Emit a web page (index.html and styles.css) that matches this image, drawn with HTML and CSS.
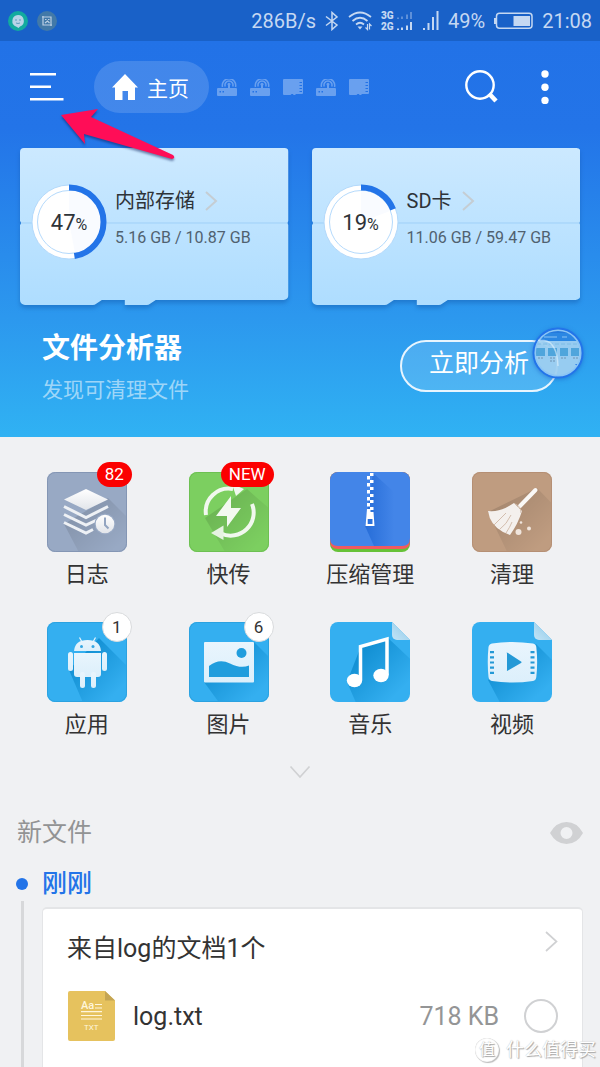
FILE: index.html
```html
<!DOCTYPE html>
<html lang="zh-CN">
<head>
<meta charset="utf-8">
<meta name="viewport" content="width=device-width, initial-scale=1">
<title>主页</title>
<link rel="stylesheet" href="styles.css">
</head>
<body>
<svg class="defs" width="0" height="0" aria-hidden="true">
  <defs>
    <linearGradient id="card-fill" x1="0" y1="0" x2="0" y2="1"><stop offset="0" stop-color="#cce9ff"/><stop offset="1" stop-color="#aeddff"/></linearGradient>
    <linearGradient id="paper" x1="0" y1="0" x2="0" y2="1"><stop offset="0" stop-color="#ffffff"/><stop offset="1" stop-color="#e2e5ea"/></linearGradient>
    <linearGradient id="ice" x1="0" y1="0" x2="0" y2="1"><stop offset="0" stop-color="#e9f5fd"/><stop offset="1" stop-color="#dceffb"/></linearGradient>
    <linearGradient id="fold" x1="0" y1="1" x2="1" y2="0"><stop offset="0" stop-color="#c3e4f6"/><stop offset="1" stop-color="#8cc8e8"/></linearGradient>
    <linearGradient id="shade" x1="0" y1="0" x2="1" y2="1"><stop offset="0.2" stop-color="#000" stop-opacity=".12"/><stop offset="0.75" stop-color="#000" stop-opacity="0"/></linearGradient>
    <linearGradient id="shade-zip" x1="0" y1="0" x2="1" y2="0"><stop offset="0" stop-color="#0a55c8" stop-opacity=".5"/><stop offset="1" stop-color="#0a55c8" stop-opacity="0"/></linearGradient>
    <linearGradient id="shade-blue" x1="0" y1="0" x2="1" y2="1"><stop offset="0.2" stop-color="#007fc4" stop-opacity=".65"/><stop offset="0.72" stop-color="#007fc4" stop-opacity="0"/></linearGradient>
    <clipPath id="tile"><rect width="80" height="80" rx="8"/></clipPath>
    <clipPath id="tile-fold"><path d="M8 0H62L80 18V72a8 8 0 0 1-8 8H8a8 8 0 0 1-8-8V8a8 8 0 0 1 8-8z"/></clipPath>
    <clipPath id="bubble-clip"><circle cx="28" cy="28" r="23"/></clipPath>
    <symbol id="card-shape" viewBox="0 0 269 157" preserveAspectRatio="none">
      <path fill="url(#card-fill)" d="M4 0H265a4 4 0 0 1 4 4V73q-2 2 0 4V147a5 5 0 0 1-5 5H136l-6 4q-1 1-3 1H105V152H82l-6 4q-1 1-3 1H5a5 5 0 0 1-5-5V77q2-2 0-4V4a4 4 0 0 1 4-4z"/>
      <path d="M1 75H268" stroke="#9fd0f8" stroke-width="1"/>
    </symbol>
    <symbol id="router" viewBox="0 0 20 17">
      <path fill-rule="evenodd" d="M1 9H11V6.500a1.500 1.500 0 1 1 2 0V9H19a1 1 0 0 1 1 1V16a1 1 0 0 1-1 1H1a1 1 0 0 1-1-1V10a1 1 0 0 1 1-1zM2.500 12v1.500H4V12zM5.500 12v1.500H7V12z" fill="currentColor"/>
      <path d="M5.500 8A6.700 6.700 0 1 1 18.500 8M8.300 7.500A4 4 0 1 1 15.700 7.500" fill="none" stroke="currentColor" stroke-width="1.500"/>
    </symbol>
    <symbol id="chip" viewBox="0 0 20 17">
      <path fill-rule="evenodd" d="M1 0H19a1 1 0 0 1 1 1V14a1 1 0 0 1-1 1H13l-1 1H10.500l-.5-1H8.500l-1 1H1a1 1 0 0 1-1-1V1a1 1 0 0 1 1-1zM16.500 3v1H19V3zM16.500 6v1H19V6zM16.500 9v1H19V9zM16.500 12v1H19V12z" fill="currentColor"/>
    </symbol>
  </defs>
</svg>

<div class="page">
  <header class="status">
    <svg class="notice" width="20" height="20" viewBox="0 0 20 20" aria-hidden="true"><circle cx="10" cy="10" r="10" fill="#12ab9f"/><path d="M10 4a6 6 0 0 1 2 11.600L10.500 17l-2-1.300A6 6 0 0 1 10 4z" fill="#b7d4e8"/><path d="M7 9h2M11 9h2M8 12q2 1 4 0" stroke="#5a9fc0" fill="none"/></svg>
    <svg class="notice" width="20" height="20" viewBox="0 0 20 20" aria-hidden="true"><circle cx="10" cy="10" r="10" fill="#4279a8"/><path d="M6 5V14H15M5 6H14V15M8 12l2.500-2 2 2M8 8.500h1.500M11 8.500h1.500" stroke="#bcd0e4" stroke-width="1.200" fill="none"/></svg>
    <div class="status-right">
      <span class="speed">286B/s</span>
      <svg width="14" height="20" viewBox="0 0 14 20" aria-hidden="true"><path d="M1 5.500 12 14 7 18.500V1.500L12 6 1 14.500" fill="none" stroke="currentColor" stroke-width="1.500"/></svg>
      <svg width="24" height="20" viewBox="0 0 24 20" fill="none" stroke="currentColor" stroke-width="1.700" aria-hidden="true"><path d="M1 6Q12 -3 23 6M4.500 10Q12 3.500 19.500 10M8 13.500Q12 10 16 13.500"/><path d="M9.500 15.500h5L12 18.500z" fill="currentColor" stroke="none"/><path d="M19.500 13v5.500l-2-2M21.500 18.500V13l2 2" stroke-width="1.200"/></svg>
      <svg class="net" width="33" height="20" viewBox="0 0 33 20" fill="currentColor" role="img" aria-label="3G 2G"><text x="0" y="8">3G</text><text x="0" y="19">2G</text><path d="M16 6.500h2V8h-2zM20 5.500h2V8h-2zM25 3.500h2V8h-2zM29 1h2v7h-2z" opacity=".4"/><path d="M16 17.500h2V19h-2zM20 16.500h2V19h-2zM25 14.500h2V19h-2zM29 11h2v8h-2z"/></svg>
      <svg width="16" height="20" viewBox="0 0 16 20" fill="currentColor" aria-hidden="true"><path d="M0 17h2v2H0zM4.500 12H6.500v7H4.500zM9 6h2v13H9zM13.500 0h2v19h-2z"/></svg>
      <span>49%</span>
      <svg width="39" height="18" viewBox="0 0 39 18" aria-hidden="true"><rect x="2.500" y="1.200" width="35.500" height="15" rx="3" fill="none" stroke="currentColor" stroke-width="1.500"/><path d="M0 6h2v6H0zM19.500 4H36V14H19.500z" fill="currentColor"/></svg>
      <time>21:08</time>
    </div>
  </header>

  <section class="hero">
    <nav class="toolbar">
      <button class="icon-button" aria-label="菜单"><svg width="34" height="28" viewBox="0 0 34 28" fill="#fff"><path d="M0 0H26V2.500H0zM0 12.500H21V15H0zM0 25H33.500V27.500H0z"/></svg></button>
      <div class="tabs">
        <button class="home"><svg width="26" height="26" viewBox="0 0 26 26" fill="#fff" aria-hidden="true"><path d="M13 0 26 13.500H23V26H16V17H10.500V26H3V13.500H0z"/></svg><span>主页</span></button>
        <div class="drives">
          <svg width="20" height="17"><use href="#router"/></svg>
          <svg width="20" height="17"><use href="#router"/></svg>
          <svg width="20" height="17"><use href="#chip"/></svg>
          <svg width="20" height="17"><use href="#router"/></svg>
          <svg width="20" height="17"><use href="#chip"/></svg>
        </div>
      </div>
      <button class="icon-button" aria-label="搜索"><svg width="34" height="34" viewBox="0 0 34 34" fill="none" stroke="#fff"><circle cx="15" cy="15" r="13.700" stroke-width="2.400"/><path d="M24 23.500 31 31" stroke-width="4.500"/></svg></button>
      <button class="icon-button" aria-label="更多"><svg width="8" height="34" viewBox="0 0 8 34" fill="#fff"><circle cx="4" cy="4" r="3.700"/><circle cx="4" cy="17.200" r="3.700"/><circle cx="4" cy="30.500" r="3.700"/></svg></button>
    </nav>

    <svg class="pointer" width="120" height="60" viewBox="0 0 120 60" aria-hidden="true"><path fill="#ff0d57" d="M3 10 40 4 33 12 115 50Q118 53 114 54L26 29 27 39z"/></svg>

    <div class="storage">
      <a class="drive-card" href="#internal">
        <svg class="card-bg" aria-hidden="true"><use href="#card-shape"/></svg>
        <span class="ring">
          <svg width="76" height="76" viewBox="0 0 76 76" aria-hidden="true"><circle cx="38" cy="38" r="37" fill="#fff" stroke="#b3d9fb"/><circle cx="38" cy="38" r="31.500" fill="none" stroke="#b5dafc"/><path d="M38 38V7A31 31 0 0 1 44 68.800z" fill="#f9fbff"/><circle cx="38" cy="38" r="34.500" fill="none" stroke="#2374e8" stroke-width="6" pathLength="100" stroke-dasharray="47.500 100" transform="rotate(-90 38 38)"/></svg>
          <span class="percent">47<small>%</small></span>
        </span>
        <span class="drive-text">
          <span class="drive-name">内部存储 <svg width="13" height="20" viewBox="0 0 13 20" fill="none" stroke="#c5cdd3" stroke-width="2" aria-hidden="true"><path d="M1 1 11 10 1 19"/></svg></span>
          <span class="drive-size">5.16 GB / 10.87 GB</span>
        </span>
      </a>
      <a class="drive-card" href="#sdcard">
        <svg class="card-bg" aria-hidden="true"><use href="#card-shape"/></svg>
        <span class="ring">
          <svg width="76" height="76" viewBox="0 0 76 76" aria-hidden="true"><circle cx="38" cy="38" r="37" fill="#fff" stroke="#b3d9fb"/><circle cx="38" cy="38" r="31.500" fill="none" stroke="#b5dafc"/><path d="M38 38V7A31 31 0 0 1 67 27z" fill="#f9fbff"/><circle cx="38" cy="38" r="34.500" fill="none" stroke="#2374e8" stroke-width="6" pathLength="100" stroke-dasharray="19 100" transform="rotate(-90 38 38)"/></svg>
          <span class="percent">19<small>%</small></span>
        </span>
        <span class="drive-text">
          <span class="drive-name">SD卡 <svg width="13" height="20" viewBox="0 0 13 20" fill="none" stroke="#c5cdd3" stroke-width="2" aria-hidden="true"><path d="M1 1 11 10 1 19"/></svg></span>
          <span class="drive-size">11.06 GB / 59.47 GB</span>
        </span>
      </a>
    </div>

    <div class="analyzer">
      <div>
        <h1 class="analyzer-title">文件分析器</h1>
        <p class="analyzer-note">发现可清理文件</p>
      </div>
      <div class="analyze-wrap">
        <button class="analyze">立即分析</button>
        <svg class="bubble" width="56" height="56" viewBox="0 0 56 56" aria-hidden="true">
          <g clip-path="url(#bubble-clip)"><path d="M0 0H56V56H0z" fill="#a5d5f3" opacity=".9"/><path d="M0 0H56V16H0z" fill="#2b87e3"/><path d="M14 12h13M32 12h5" stroke="#8dc4f3"/><path d="M10 7h36" stroke="#1f6dd6"/><path d="M7 19h42" stroke="#7dbde6" stroke-dasharray="4 2"/><path d="M6 23h9v8H6zM18 23h9v8h-9zM30 23h8v8h-8zM41 23h8v8h-8z" fill="#4fa5dc"/><path d="M8 33h6M20 33h6M31 33h6M43 33h5M20 36h5" stroke="#7193b3" stroke-dasharray="2 1"/><path d="M45 39h3v3z" fill="#2374e8"/></g>
          <circle cx="28" cy="28" r="24.500" fill="none" stroke="#2374ea" stroke-width="2"/><circle cx="28" cy="28" r="22.800" fill="none" stroke="#8cc5f5" stroke-width="1.500"/>
          <path d="M8 15.500H14Q27 17 28 41" fill="none" stroke="#e5f4fd" stroke-width="1.500" opacity=".6"/>
        </svg>
      </div>
    </div>
  </section>

  <main class="content">
    <div class="apps">
      <a class="app" href="#log">
        <span class="app-icon"><svg width="80" height="80" viewBox="0 0 80 80" aria-hidden="true"><g clip-path="url(#tile)"><path d="M0 0H80V80H0z" fill="#98a9c4"/><path d="M17 52 61 26 90 55V90H37z" fill="url(#shade)"/></g><rect x=".5" y=".5" width="79" height="79" rx="8" fill="none" stroke="#8496b4"/>
          <path d="M39 17 61 27.500 39 38 17 27.500z" fill="url(#paper)"/><path d="M17 34.500 39 45.500 61 34.500M17 42.500 39 53 54 46M17 50.500 39 61 46 57.500" fill="none" stroke="#eef1f5" stroke-width="3"/><circle cx="58" cy="52" r="10.500" fill="#98a9c4"/><circle cx="58" cy="52" r="9.300" fill="url(#paper)"/><path d="M58 45.500V53L61.500 56.500" fill="none" stroke="#93a5c1" stroke-width="2"/></svg>
          <span class="tag">82</span></span>
        <span class="app-label">日志</span>
      </a>
      <a class="app" href="#transfer">
        <span class="app-icon"><svg width="80" height="80" viewBox="0 0 80 80" aria-hidden="true"><g clip-path="url(#tile)"><path d="M0 0H80V80H0z" fill="#7ccf60"/><path d="M16 46 58 17 90 45V90H42z" fill="url(#shade)"/></g><rect x=".5" y=".5" width="79" height="79" rx="8" fill="none" stroke="#6dc052"/>
          <path d="M17 43A23 23 0 0 1 44 17M63 32A23 23 0 0 1 32 61.500" fill="none" stroke="#f1f8ee" stroke-width="4"/><path d="M43 12 55 17 47 24z" fill="#f1f8ee"/><path d="M22 61 34.500 53.500V68z" fill="#e6f3e1"/><path d="M42 24 27 44H38V55L52 36H42z" fill="#f3f9f0"/></svg>
          <span class="tag">NEW</span></span>
        <span class="app-label">快传</span>
      </a>
      <a class="app" href="#archive">
        <span class="app-icon"><svg width="80" height="80" viewBox="0 0 80 80" aria-hidden="true"><g clip-path="url(#tile)"><path d="M0 0H80V80H0z" fill="#66c238"/><path d="M0 0H80V69q0 8-8 8H8q-8 0-8-8z" fill="#f05a60"/><path d="M0 0H80V66q0 8-8 8H8q-8 0-8-8z" fill="#4385e8"/><path d="M43 1 64 20V74H44L35 54z" fill="url(#shade-zip)"/></g>
          <path d="M40 1h3.500v3H40zM37 4h3v3.500h-3zM40 8h3.500v3H40zM37 11h3v3.500h-3zM40 15h3.500v3H40zM37 18h3v3.500h-3zM40 22h3.500v3H40zM37 25h3v3.500h-3zM40 28h3.500v3H40zM37 31h3v3.500h-3zM40 35h3.500v3H40z" fill="#fff"/><path fill-rule="evenodd" d="M37 37h3.500v3h3L44.500 54h-9zM37.700 47v5h4.800v-5z" fill="#fff"/></svg></span>
        <span class="app-label">压缩管理</span>
      </a>
      <a class="app" href="#clean">
        <span class="app-icon"><svg width="80" height="80" viewBox="0 0 80 80" aria-hidden="true"><g clip-path="url(#tile)"><path d="M0 0H80V80H0z" fill="#bf9c80"/><path d="M16 40 65 16 90 42V90H40z" fill="url(#shade)"/></g><rect x=".5" y=".5" width="79" height="79" rx="8" fill="none" stroke="#b58f74"/>
          <path d="M48 34 63.500 18" stroke="#faf8f6" stroke-width="4" stroke-linecap="round"/><path d="M16 39Q28 40 37 34L42 31 50 39Q46 52 38 63L31 60Q18 53 16 39z" fill="#f4f0ed"/><path d="M22 53 34 41M27 58Q35 52 39 43M34 61Q38 55 40 50M43 32Q49 34 49 41" fill="none" stroke="#d3bdad" stroke-width="1"/><circle cx="46.500" cy="60" r="3" fill="#f0e5dd"/><circle cx="57" cy="56.500" r="2" fill="#f0e5dd"/><circle cx="49" cy="50.500" r="1.300" fill="#f0e5dd"/></svg></span>
        <span class="app-label">清理</span>
      </a>
      <a class="app" href="#apps">
        <span class="app-icon"><svg width="80" height="80" viewBox="0 0 80 80" aria-hidden="true"><g clip-path="url(#tile)"><path d="M0 0H80V80H0z" fill="#34aff0"/><path d="M22 48 52 16 90 54V90H40z" fill="url(#shade-blue)"/></g><rect x=".5" y=".5" width="79" height="79" rx="8" fill="none" stroke="#2ba2e0"/>
          <g fill="url(#ice)"><path d="M27 29Q28 18 40.500 18T54 29z"/><path d="M27 31H54V52a3 3 0 0 1-3 3H30a3 3 0 0 1-3-3z"/><rect x="21" y="30" width="5" height="19" rx="2.500"/><rect x="55" y="30" width="5" height="19" rx="2.500"/><rect x="33" y="50" width="5" height="16" rx="2.500"/><rect x="44" y="50" width="5" height="16" rx="2.500"/></g><path d="M32.500 15.500 35 20M48.500 15.500 46 20" stroke="#e9f5fd" stroke-width="1.200"/><circle cx="34.500" cy="24.500" r="1.500" fill="#34a6e2"/><circle cx="46" cy="24.500" r="1.500" fill="#34a6e2"/></svg>
          <span class="count">1</span></span>
        <span class="app-label">应用</span>
      </a>
      <a class="app" href="#pictures">
        <span class="app-icon"><svg width="80" height="80" viewBox="0 0 80 80" aria-hidden="true"><g clip-path="url(#tile)"><path d="M0 0H80V80H0z" fill="#34aff0"/><path d="M15 60 65 20 90 45V90H37z" fill="url(#shade-blue)"/></g><rect x=".5" y=".5" width="79" height="79" rx="8" fill="none" stroke="#2ba2e0"/>
          <rect x="15" y="20" width="50" height="40.500" rx="1" fill="url(#ice)"/><circle cx="52.500" cy="31" r="5" fill="#209ddd"/><path d="M20 44Q30 36 41 41.500T60 43.500V55H20z" fill="#209ddd"/></svg>
          <span class="count">6</span></span>
        <span class="app-label">图片</span>
      </a>
      <a class="app" href="#music">
        <span class="app-icon"><svg width="80" height="80" viewBox="0 0 80 80" aria-hidden="true"><g clip-path="url(#tile-fold)"><path d="M0 0H80V80H0z" fill="#34aff0"/><path d="M17 60 31 24 58 16 90 46V90H30z" fill="url(#shade-blue)"/></g><path d="M62 0 80 18H67a5 5 0 0 1-5-5z" fill="url(#fold)"/>
          <path d="M30.500 58V24.500L57 17V53" fill="none" stroke="#fff" stroke-width="3.500"/><ellipse cx="24.500" cy="58.500" rx="7.700" ry="6.700" fill="#fff"/><ellipse cx="51" cy="53.500" rx="7.700" ry="6.700" fill="#fff"/></svg></span>
        <span class="app-label">音乐</span>
      </a>
      <a class="app" href="#video">
        <span class="app-icon"><svg width="80" height="80" viewBox="0 0 80 80" aria-hidden="true"><g clip-path="url(#tile-fold)"><path d="M0 0H80V80H0z" fill="#34aff0"/><path d="M16 58 64 22 90 48V90H33z" fill="url(#shade-blue)"/></g><path d="M62 0 80 18H67a5 5 0 0 1-5-5z" fill="url(#fold)"/>
          <path d="M20 21.500Q40 18.500 61 21.500 64 22 64.300 25 66 40 64.300 55 64 58.500 61 59 40 62 20 59 17 58.500 16.500 55 15 40 16.500 25 17 22 20 21.500z" fill="url(#ice)"/><path d="M35 31.500Q34 30 36 31L49 39.500Q50 40 49 41L36 48.500Q34.500 49.500 35 48z" fill="#2499d6"/><path d="M20 29V53M60.500 29V53" stroke="#2499d6" stroke-width="4" stroke-dasharray="2.200 3"/></svg></span>
        <span class="app-label">视频</span>
      </a>
    </div>

    <button class="more" aria-label="展开"><svg width="22" height="14" viewBox="0 0 22 14" fill="none" stroke="#d0d1d3" stroke-width="1.700"><path d="M1.500 1.500 11 12 20.500 1.500"/></svg></button>

    <div class="section-head">
      <h2 class="section-title">新文件</h2>
      <button class="icon-button" aria-label="显示"><svg width="33" height="22" viewBox="0 0 33 22"><path fill="#d0d1d3" fill-rule="evenodd" d="M0 11Q6 0 16.500 0T33 11Q27 22 16.500 22T0 11zM16.500 5a6 6 0 1 0 0 12a6 6 0 1 0 0-12z"/></svg></button>
    </div>

    <div class="timeline">
      <div class="rail"><span class="dot"></span><span class="line"></span></div>
      <section class="group">
        <h3 class="group-title">刚刚</h3>
        <article class="files">
          <a class="files-head" href="#from-log"><span>来自log的文档1个</span><svg width="13" height="22" viewBox="0 0 13 22" fill="none" stroke="#d0d1d3" stroke-width="1.700" aria-hidden="true"><path d="M1 1 11.500 10.500 1 20"/></svg></a>
          <div class="file">
            <svg class="file-icon" width="48" height="50" viewBox="0 0 48 50" aria-hidden="true"><path d="M3 0H38L48 9.500V48a2 2 0 0 1-2 2H3a2 2 0 0 1-2-2V2a2 2 0 0 1 2-2z" fill="#e6c25e"/><path d="M38 0 48 9.500H38z" fill="#c4a553"/><text class="file-aa" x="14" y="18">Aa</text><path d="M28 13.500H35M28 17H35M14 20.700H35M14 24.500H35M14 28H35" stroke="#fff6dc" stroke-width="1.200"/><text class="file-ext" x="17" y="39">TXT</text></svg>
            <label class="file-name" for="pick-log">log.txt</label>
            <span class="file-size">718 KB</span>
            <input class="pick" id="pick-log" type="checkbox">
          </div>
        </article>
      </section>
    </div>
  </main>

  <div class="credit"><span class="credit-mark">值</span><span>什么值得买</span></div>
</div>
</body>
</html>
```
FILE: styles.css
```css
* { box-sizing: border-box; }
body {
  margin: 0;
  background: #f0f1f3;
  color: #333;
  font-family: Roboto, "Noto Sans CJK SC", sans-serif;
}
a { color: inherit; text-decoration: none; }
button { padding: 0; border: 0; background: none; font: inherit; color: inherit; cursor: pointer; }
h1, h2, h3, p { margin: 0; font-weight: 400; }
svg { display: block; flex: none; }
.defs { position: absolute; }

.page { position: relative; display: flex; flex-direction: column; min-height: 100vh; }

.status {
  display: flex;
  align-items: center;
  gap: 9px;
  height: 41px;
  padding: 0 8px;
  background: #1961c8;
  color: #c5d8f2;
  font-size: 20px;
}
.status-right { display: flex; align-items: center; gap: 9px; margin-left: auto; }
.net text { font-size: 10px; font-weight: 900; }

.hero {
  position: relative;
  background: linear-gradient(#2272e7 0, #2374e8 22%, #2c98ee 70%, #30b2f3 100%);
  color: #fff;
}
.toolbar { display: flex; align-items: center; gap: 42px; height: 92px; padding: 0 51px 0 30px; }
.icon-button { flex: none; }
.tabs { display: flex; flex: 1; align-items: center; gap: 8px; margin-left: -12px; }
.home {
  display: flex;
  align-items: center;
  gap: 9px;
  height: 52px;
  padding: 0 20px 0 18px;
  border-radius: 26px;
  background: rgba(255, 255, 255, .15);
  font-size: 21px;
}
.drives { display: flex; gap: 13px; color: rgba(255, 255, 255, .32); }
.pointer { position: absolute; z-index: 2; top: 64px; left: 58px; filter: drop-shadow(0 2px 1px rgba(10, 30, 90, .5)); }

.storage { display: grid; grid-template-columns: 1fr 1fr; gap: 23px; padding: 15px 20px 0; }
.drive-card {
  position: relative;
  display: flex;
  align-items: flex-start;
  gap: 8px;
  height: 157px;
  padding: 36px 12px 0 11px;
  color: #2e3338;
}
.card-bg {
  position: absolute;
  inset: 0;
  width: 100%;
  height: 100%;
  filter: drop-shadow(0 3px 2px rgba(15, 80, 160, .4));
}
.ring { position: relative; display: grid; place-items: center; }
.ring > * { grid-area: 1 / 1; }
.percent { position: relative; font-size: 22px; }
.percent small { font-size: 16px; }
.drive-text { position: relative; display: flex; flex-direction: column; gap: 12px; padding-top: 3px; }
.drive-name { display: flex; align-items: center; gap: 10px; font-size: 20px; line-height: 28px; }
.drive-size { color: #50616f; font-size: 16px; line-height: 22px; white-space: nowrap; }

.analyzer { display: flex; justify-content: space-between; align-items: flex-start; padding: 24px 42px 31px; }
.analyzer-title { font-size: 28px; font-weight: 700; line-height: 40px; }
.analyzer-note { padding-top: 5px; color: rgba(255, 255, 255, .55); font-size: 21px; line-height: 32px; }
.analyze-wrap { position: relative; padding-top: 11px; }
.analyze {
  display: block;
  padding: 0 27px 4px;
  border: 2px solid #e8f5fe;
  border-radius: 26px;
  background: rgba(255, 255, 255, .15);
  font-size: 25px;
  line-height: 44px;
}
.bubble { position: absolute; top: -4px; right: -28px; filter: drop-shadow(0 1px 2px rgba(20, 80, 190, .5)); }

.content { display: flex; flex: 1; flex-direction: column; padding-top: 35px; }
.apps { display: grid; grid-template-columns: repeat(4, 1fr); row-gap: 34px; padding: 0 17px 0 16px; }
.app { display: flex; flex-direction: column; align-items: center; }
.app-icon { position: relative; }
.app-label { padding-top: 10px; font-size: 22px; line-height: 26px; }
.tag {
  position: absolute;
  top: -10px;
  right: -5px;
  padding: 0 8px;
  border-radius: 13px;
  background: #fb0000;
  color: #fff;
  font-size: 17px;
  line-height: 25px;
}
.count {
  position: absolute;
  top: -10px;
  right: -5px;
  width: 30px;
  border: 1px solid #d9dbdd;
  border-radius: 50%;
  background: #fff;
  font-size: 17px;
  line-height: 28px;
  text-align: center;
}
.more { align-self: center; padding: 27px 20px; }

.section-head { display: flex; align-items: center; justify-content: space-between; padding: 9px 17px 0; }
.section-title { color: #929394; font-size: 25px; line-height: 36px; }

.timeline { display: flex; flex: 1; gap: 14px; padding: 16px 17px 0 16px; }
.rail { display: flex; flex-direction: column; align-items: center; gap: 11px; width: 12px; padding-top: 11px; }
.dot { width: 12px; height: 12px; border-radius: 50%; background: #2374e8; }
.line { flex: 1; width: 3px; background: #d7d8da; }
.group { display: flex; flex: 1; flex-direction: column; }
.group-title { color: #2374e8; font-size: 25px; font-weight: 500; line-height: 34px; }
.files {
  flex: 1;
  margin-top: 6px;
  padding: 22px 24px;
  border: solid #e4e5e7;
  border-width: 2px 1px 0;
  border-radius: 5px 5px 0 0;
  background: #fff;
}
.files-head { display: flex; justify-content: space-between; font-size: 25px; line-height: 36px; }
.file { display: flex; align-items: center; padding-top: 24px; font-size: 25px; }
.file-aa { fill: #fff6dc; font-size: 11px; font-weight: 500; }
.file-ext { fill: #fff6dc; font-size: 8px; }
.file-name { flex: 1; padding-left: 18px; }
.file-size { padding-right: 25px; color: #949596; }
.pick {
  appearance: none;
  width: 34px;
  height: 34px;
  margin: 0;
  border: 2px solid #d0d1d3;
  border-radius: 50%;
}

.credit {
  position: absolute;
  right: 4px;
  bottom: 4px;
  display: flex;
  align-items: center;
  gap: 7px;
  color: #fff;
  font-size: 18px;
  line-height: 26px;
  text-shadow: 1px 1px 1px #a5a5a5, 0 0 1px #b5b5b5;
}
.credit-mark {
  width: 24px;
  border-radius: 50%;
  font-size: 16px;
  line-height: 24px;
  text-align: center;
  box-shadow: 1px 1px 1px #bbb, inset 0 0 1px #aaa;
}
```
